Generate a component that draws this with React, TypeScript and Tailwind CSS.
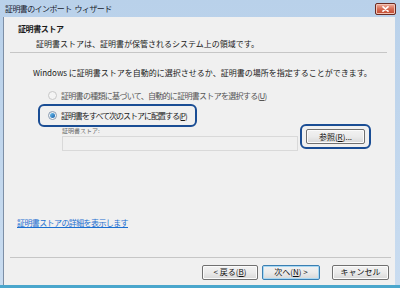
import { useState } from "react";

const jp = { fontFamily: '"Noto Sans CJK JP", "Noto Sans", sans-serif' };

function Radio({ checked, disabled }: { checked: boolean; disabled?: boolean }) {
  return (
    <span
      className={`flex h-[9px] w-[9px] shrink-0 items-center justify-center rounded-full border ${
        disabled ? "border-[#c8c8c8] bg-[#f4f4f4]" : "border-[#8a9bb0] bg-gradient-to-b from-[#e4e9ef] to-white"
      }`}
    >
      {checked && (
        <span className="h-[5px] w-[5px] rounded-full bg-gradient-to-br from-[#6fc4f2] to-[#145ea8]" />
      )}
    </span>
  );
}

function Button({
  children,
  isDefault,
  className = "",
}: {
  children: React.ReactNode;
  isDefault?: boolean;
  className?: string;
}) {
  return (
    <button
      type="button"
      className={`flex h-[15px] items-center justify-center whitespace-nowrap rounded-[2px] border bg-gradient-to-b from-[#f2f2f2] via-[#ebebeb] to-[#d8d8d8] text-[8px] leading-none text-[#111] ${
        isDefault ? "border-[#3c7fb1] shadow-[inset_0_0_0_1px_#a7d8f4]" : "border-[#707070] shadow-[inset_0_0_0_1px_#fbfbfb]"
      } ${className}`}
    >
      {children}
    </button>
  );
}

export default function App() {
  const [choice, setChoice] = useState<"auto" | "place">("place");

  return (
    <div
      className="flex h-[288px] w-[400px] flex-col overflow-hidden bg-gradient-to-b from-[#b9d1ea] to-[#c9dcf0] text-[#1a1a1a]"
      style={jp}
    >
      {/* Title bar */}
      <div className="flex h-[17px] shrink-0 items-center justify-between pl-[5px] pr-[4px]">
        <span className="flex gap-[3px] text-[8px] leading-none tracking-[-0.6px] text-[#17212e]">
          <span>証明書のインポート</span>
          <span>ウィザード</span>
        </span>
        <div className="mt-[1px] flex h-[12px] w-[21px] items-center justify-center rounded-[2px] border border-[#6b2b22] bg-gradient-to-b from-[#eeb1a2] via-[#d66a52] to-[#c04a30] shadow-[inset_0_0_0_1px_#f2c3b5]">
          <svg width="7" height="6" viewBox="0 0 7 6">
            <path d="M1 0.8 L6 5.2 M6 0.8 L1 5.2" stroke="#fff" strokeWidth="1.6" strokeLinecap="round" />
          </svg>
        </div>
      </div>

      {/* Client area */}
      <div className="ml-[3px] mr-[5px] flex min-h-0 flex-1 flex-col border-l border-[#7d8fa6] bg-[#f0f0f0]">
        {/* Header */}
        <div className="pl-[14px] pt-[6px]">
          <div className="text-[8px] font-bold leading-[12px] tracking-[-0.4px]">証明書ストア</div>
          <div className="mt-[3px] pl-[18px] text-[8px] leading-[11px]">
            証明書ストアは、証明書が保管されるシステム上の領域です。
          </div>
        </div>
        <div className="ml-[6px] mr-[8px] mt-[3px] h-[2px] border-t border-[#c6c6c6] border-b-white" />

        {/* Body */}
        <div className="flex flex-1 flex-col pl-[29px] pt-[13px]">
          <div className="whitespace-nowrap text-[8px] leading-[11px]">
            Windows に証明書ストアを自動的に選択させるか、証明書の場所を指定することができます。
          </div>

          <div
            className="mt-[12px] flex items-center gap-[4px] whitespace-nowrap pl-[15px] text-[8px] leading-[11px] tracking-[-0.7px] text-[#555]"
            onClick={() => setChoice("auto")}
          >
            <Radio checked={choice === "auto"} disabled />
            <span>証明書の種類に基づいて、自動的に証明書ストアを選択する(<span className="underline">U</span>)</span>
          </div>

          <div className="mt-[3px] flex">
            <div
              className="ml-[5px] flex h-[23px] w-[159px] items-center gap-[4px] whitespace-nowrap rounded-[6px] border-2 border-[#1a4d94] pl-[8px] text-[8px] leading-[11px] tracking-[-1px]"
              onClick={() => setChoice("place")}
            >
              <Radio checked={choice === "place"} />
              <span>
                証明書をすべて次のストアに配置する(<span className="underline">P</span>)
              </span>
            </div>
          </div>

          <div className="flex items-start pl-[29px]">
            <div className="flex flex-col">
              <span className="text-[6px] leading-[8px] text-[#6d6d6d]">証明書ストア:</span>
              <div className="mt-[1px] h-[15px] w-[236px] border border-[#d9d9d9] bg-[#f0f0f0]" />
            </div>
            <div className="-mt-[3px] ml-[2px] flex h-[25px] w-[71px] items-center justify-center rounded-[6px] border-2 border-[#1a4d94]">
              <Button className="w-[59px]">
                参照(<span className="underline">R</span>)...
              </Button>
            </div>
          </div>

          <div className="mt-[66px] -ml-[16px] whitespace-nowrap text-[8px] leading-[11px] tracking-[-0.6px] text-[#1b6fd0] underline">
            証明書ストアの詳細を表示します
          </div>
        </div>

        <div className="ml-[6px] mr-[4px] h-[2px] border-t border-[#c6c6c6] border-b-white" />

        {/* Footer buttons */}
        <div className="flex h-[26px] items-center justify-end pr-[6px]">
          <Button className="w-[56px]">
            &lt; 戻る(<span className="underline">B</span>)
          </Button>
          <Button isDefault className="ml-[4px] w-[58px]">
            次へ(<span className="underline">N</span>) &gt;
          </Button>
          <Button className="ml-[12px] w-[57px]">キャンセル</Button>
        </div>
      </div>
      <div className="h-[3px] shrink-0 bg-[#4aa6cc]" />
    </div>
  );
}
